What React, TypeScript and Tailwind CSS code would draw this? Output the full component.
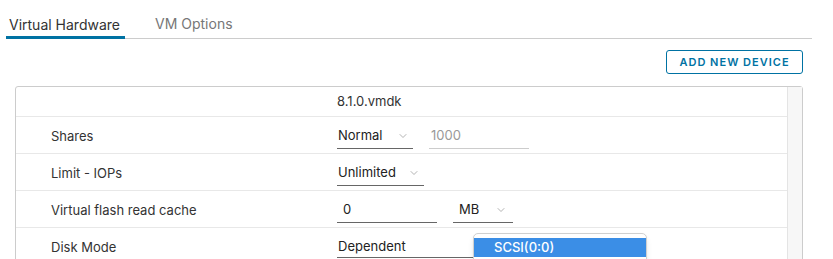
import { ChevronDown } from "lucide-react";

const font = { fontFamily: "Inter, 'Noto Sans', sans-serif" };

const Row = ({ label, children }: { label: string; children?: React.ReactNode }) => (
  <div className="flex h-[37px] items-center border-b border-[#e8e8e8] pt-[3px]">
    <div className="w-[321px] pl-[35px] text-[13px] text-[#333]">{label}</div>
    <div className="flex items-center gap-4">{children}</div>
  </div>
);

const Select = ({ value, width }: { value: string; width: string }) => (
  <div className={`flex h-[24px] items-center justify-between border-b border-[#666] text-[13px] text-[#222] ${width}`}>
    <span className="pl-[1px]">{value}</span>
    <ChevronDown className="mr-[4px] h-[12px] w-[12px] text-[#999]" strokeWidth={1.5} />
  </div>
);

export default function App() {
  return (
    <div className="relative h-[259px] w-[833px] overflow-hidden bg-white" style={font}>
      <div className="ml-[6px] flex h-[39px] w-[806px] items-end border-b border-[#cccccc]">
        <div className="mb-[-1px] flex h-[39px] w-[119px] items-center border-b-[3px] border-[#0072a3] pl-[3px] pt-[12px] text-[14px] text-[#333]">
          Virtual Hardware
        </div>
        <div className="ml-[30px] flex h-[39px] items-center pt-[9px] text-[14px] text-[#777]">VM Options</div>
      </div>

      <div className="flex justify-end pr-[30px] pt-[11px]">
        <button className="h-[24px] w-[137px] rounded-[3px] border border-[#0072a3] pt-[1px] text-[11px] font-semibold tracking-[1px] text-[#0072a3]">
          ADD NEW DEVICE
        </button>
      </div>

      <div className="ml-[15px] mt-[12px] flex w-[788px] rounded-t-[3px] border border-[#cccccc]">
        <div className="flex-1">
          <div className="flex h-[30px] items-center border-b border-[#e8e8e8] pt-[1px]">
            <div className="w-[321px]" />
            <span className="text-[13px] text-[#333]">8.1.0.vmdk</span>
          </div>
          <Row label="Shares">
            <Select value="Normal" width="w-[76px]" />
            <div className="flex h-[24px] w-[100px] items-center border-b border-[#cccccc] pl-[2px] text-[13px] text-[#999]">1000</div>
          </Row>
          <Row label="Limit - IOPs">
            <Select value="Unlimited" width="w-[87px]" />
          </Row>
          <Row label="Virtual flash read cache">
            <div className="flex h-[24px] w-[100px] items-center border-b border-[#666] pl-[6px] text-[13px] text-[#222]">0</div>
            <div className="flex h-[24px] w-[60px] items-center justify-between border-b border-[#666] pl-[6px] text-[13px] text-[#222]">
              <span>MB</span>
              <ChevronDown className="mr-[6px] h-[12px] w-[12px] text-[#999]" strokeWidth={1.5} />
            </div>
          </Row>
          <Row label="Disk Mode">
            <div className="flex h-[21px] w-[200px] items-center border-b border-[#666] pl-[1px] pb-[1px] text-[13px] text-[#222]">Dependent</div>
          </Row>
        </div>
        <div className="w-[15px] border-l border-[#e4e4e4] bg-[#f7f7f7]" />
      </div>

      <div className="absolute left-[473px] top-[233px] h-[40px] w-[174px] rounded-[5px] border border-[#d0d0d0] bg-white pt-[4px] shadow-md">
        <div className="flex h-[19px] items-center bg-[#3b8ee6] pl-[20px] text-[13px] font-medium text-white">SCSI(0:0)</div>
      </div>
    </div>
  );
}
